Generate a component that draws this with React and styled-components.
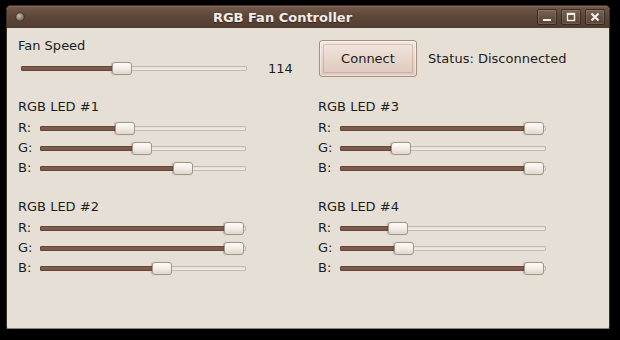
import React from 'react';
import styled, { createGlobalStyle } from 'styled-components';

const GlobalStyle = createGlobalStyle`
  html, body {
    margin: 0;
    padding: 0;
    background: #000;
  }
  body {
    font-family: 'DejaVu Sans', 'Liberation Sans', sans-serif;
    font-size: 13px;
    color: #1c1c1c;
  }
`;

const Window = styled.div`
  width: 604px;
  height: 324px;
  margin: 5px 0 0 6px;
  box-sizing: border-box;
  display: flex;
  flex-direction: column;
  border: 1px solid #3b2e25;
  border-bottom-color: #8c8278;
  border-radius: 5px 5px 2px 2px;
  overflow: hidden;
  background: #e6dfd5;
`;

const TitleBar = styled.div`
  height: 22px;
  flex: none;
  display: flex;
  align-items: center;
  padding: 0 4px 0 8px;
  background: linear-gradient(#735949 0%, #5e4739 45%, #503c30 100%);
  box-shadow: inset 0 1px rgba(255, 255, 255, 0.12);
`;

const MenuDot = styled.div`
  width: 10px;
  height: 10px;
  flex: none;
  display: flex;
`;

const Title = styled.div`
  flex: 1;
  text-align: center;
  padding-left: 3px;
  font-weight: bold;
  font-size: 13px;
  color: #f3ede7;
  text-shadow: 0 1px 1px rgba(0, 0, 0, 0.4);
`;

const WinButtons = styled.div`
  display: flex;
  gap: 4px;
`;

const WinButton = styled.div`
  width: 20px;
  height: 16px;
  box-sizing: border-box;
  display: flex;
  align-items: center;
  justify-content: center;
  border: 1px solid rgba(20, 12, 8, 0.55);
  box-shadow: inset 0 0 0 1px rgba(255, 255, 255, 0.12);
  border-radius: 2px;
  background: linear-gradient(rgba(255, 255, 255, 0.1), rgba(255, 255, 255, 0.03));
`;

const Content = styled.div`
  flex: 1;
  display: flex;
  flex-direction: column;
  gap: 21px;
  padding: 10px 0 0 11px;
`;

const TopRow = styled.div`
  display: grid;
  grid-template-columns: 300px 1fr;
  align-items: center;
`;

const Block = styled.div`
  display: flex;
  flex-direction: column;
  gap: ${p => p.$gap}px;
`;

const Label = styled.div`
  line-height: 16px;
`;

const SliderRow = styled.div`
  height: 20px;
  display: flex;
  align-items: center;
`;

const RowLabel = styled.div`
  width: 22px;
  flex: none;
  line-height: 16px;
`;

const Track = styled.div`
  position: relative;
  flex: none;
  width: ${p => p.$width}px;
  height: 5px;
  box-sizing: border-box;
  margin-left: ${p => p.$offset || 0}px;
  background: linear-gradient(#e4ddd4, #f2ede7);
  border: 1px solid #c4b9ac;
  border-radius: 1px;
`;

const Fill = styled.div`
  position: absolute;
  left: -1px;
  top: -1px;
  height: 5px;
  box-sizing: border-box;
  background: #7d5a4b;
  border: 1px solid #67473a;
  border-radius: 1px;
`;

const Handle = styled.div`
  position: absolute;
  top: -5px;
  width: 20px;
  height: 13px;
  box-sizing: border-box;
  border: 1px solid #a2958a;
  border-radius: 3px;
  background: linear-gradient(#fdfbf8 0%, #f1ebe4 55%, #ded5ca 100%);
  box-shadow: -1px 0 1px rgba(60, 40, 30, 0.25);
`;

const Value = styled.div`
  margin-left: 21px;
`;

const ConnectArea = styled.div`
  display: flex;
  align-items: center;
  gap: 11px;
  margin-left: 1px;
`;

const ConnectButton = styled.button`
  position: relative;
  width: 98px;
  height: 37px;
  padding: 0;
  font-family: 'DejaVu Sans', 'Liberation Sans', sans-serif;
  font-size: 13px;
  color: #1c1c1c;
  border: 1px solid #a98f80;
  border-radius: 3px;
  background: linear-gradient(#f3e8e1, #e6d3c8 60%, #dfc8bc);
  box-shadow: inset 0 0 0 1px rgba(255, 255, 255, 0.45);

  &::after {
    content: '';
    position: absolute;
    inset: 3px;
    border: 1px solid rgba(170, 130, 110, 0.35);
    border-radius: 1px;
  }
`;

const LedGrid = styled.div`
  display: grid;
  grid-template-columns: 300px 300px;
  row-gap: 21px;
`;

function Slider({ value, width, offset }) {
  const left = Math.round((value / 255) * (width - 22));
  return (
    <Track $width={width} $offset={offset}>
      <Fill style={{ width: left + 11 }} />
      <Handle style={{ left: left - 1 }} />
    </Track>
  );
}

function LedGroup({ name, values }) {
  return (
    <Block $gap={3}>
      <Label>{name}</Label>
      <div>
        {['R:', 'G:', 'B:'].map((c, i) => (
          <SliderRow key={c}>
            <RowLabel>{c}</RowLabel>
            <Slider value={values[i]} width={206} />
          </SliderRow>
        ))}
      </div>
    </Block>
  );
}

const leds = [
  { name: 'RGB LED #1', values: [104, 127, 184] },
  { name: 'RGB LED #3', values: [255, 71, 255] },
  { name: 'RGB LED #2', values: [255, 255, 155] },
  { name: 'RGB LED #4', values: [67, 75, 255] },
];

export default function App() {
  return (
    <>
      <GlobalStyle />
      <Window>
        <TitleBar>
          <MenuDot>
            <svg width="10" height="10" viewBox="0 0 10 10">
              <defs>
                <radialGradient id="dot" cx="40%" cy="35%" r="65%">
                  <stop offset="0" stopColor="#c9bdb3" />
                  <stop offset="1" stopColor="#6d5a4d" />
                </radialGradient>
              </defs>
              <circle cx="5" cy="5" r="4.3" fill="url(#dot)" stroke="#3e3027" strokeWidth="0.8" />
            </svg>
          </MenuDot>
          <Title>RGB Fan Controller</Title>
          <WinButtons>
            <WinButton>
              <svg width="10" height="10" viewBox="0 0 10 10">
                <rect x="1" y="7" width="8" height="2" fill="#f4eee8" />
              </svg>
            </WinButton>
            <WinButton>
              <svg width="10" height="10" viewBox="0 0 10 10">
                <rect x="1.5" y="1.5" width="7" height="7" fill="none" stroke="#f4eee8" strokeWidth="1.4" />
                <rect x="1" y="1" width="8" height="2" fill="#f4eee8" />
              </svg>
            </WinButton>
            <WinButton>
              <svg width="10" height="10" viewBox="0 0 10 10">
                <path d="M1.5 1.5 L8.5 8.5 M8.5 1.5 L1.5 8.5" stroke="#f4eee8" strokeWidth="2.2" />
              </svg>
            </WinButton>
          </WinButtons>
        </TitleBar>
        <Content>
          <TopRow>
            <Block $gap={4}>
              <Label>Fan Speed</Label>
              <SliderRow>
                <Slider value={114} width={226} offset={3} />
                <Value>114</Value>
              </SliderRow>
            </Block>
            <ConnectArea>
              <ConnectButton>Connect</ConnectButton>
              <span>Status: Disconnected</span>
            </ConnectArea>
          </TopRow>
          <LedGrid>
            {leds.map(l => (
              <LedGroup key={l.name} name={l.name} values={l.values} />
            ))}
          </LedGrid>
        </Content>
      </Window>
    </>
  );
}
